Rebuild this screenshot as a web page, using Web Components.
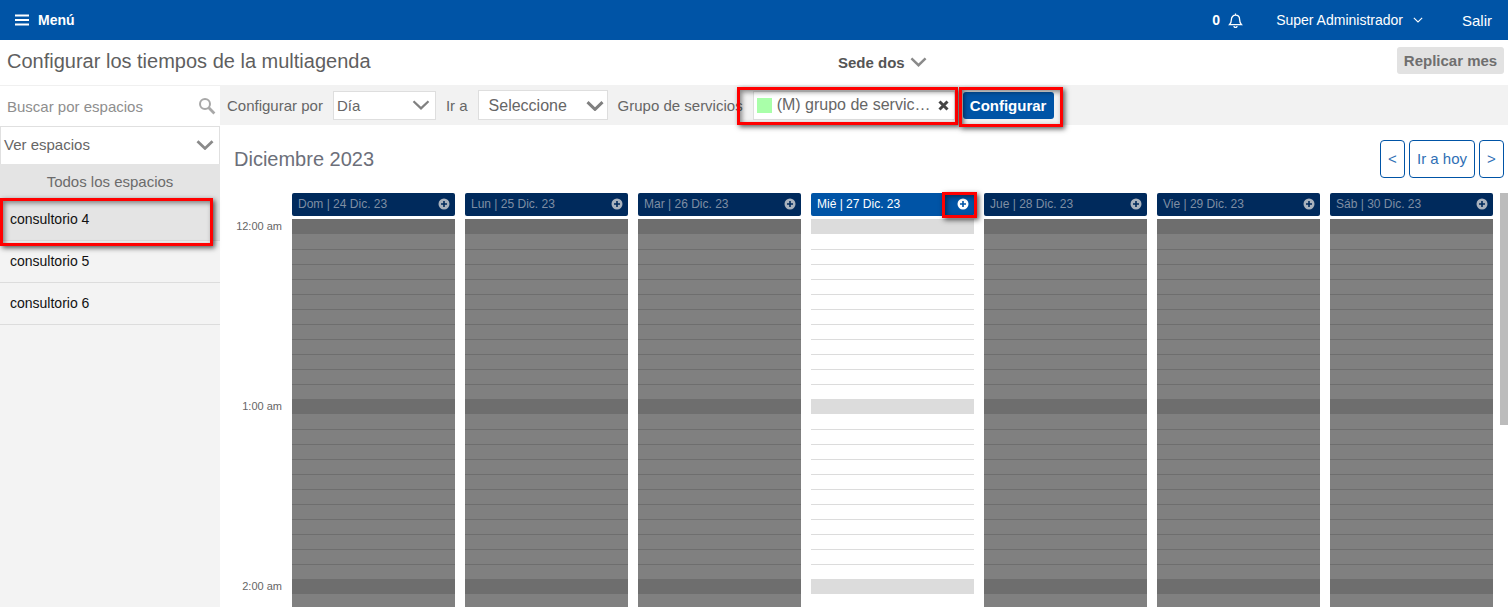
<!DOCTYPE html>
<html lang="es">
<head>
<meta charset="utf-8">
<title>Multiagenda</title>
<style>
  html, body { margin: 0; height: 607px; overflow: hidden; background: #fff; font-family: "Liberation Sans", Arial, sans-serif; }
  #app { position: relative; width: 1508px; height: 607px; overflow: hidden; display: flex; flex-direction: column; }
  #content { display: flex; flex: 1; min-height: 0; }
</style>
</head>
<body>
<div id="app">
  <top-bar></top-bar>
  <page-title></page-title>
  <div id="content">
    <space-sidebar></space-sidebar>
    <cal-main></cal-main>
  </div>
  <red-mark x="737" y="87" w="221" h="38"></red-mark>
  <red-mark x="959" y="87" w="104" h="40"></red-mark>
  <red-mark x="0" y="198" w="213" h="48"></red-mark>
  <red-mark x="942" y="192" w="35" h="26"></red-mark>
</div>

<script>
const CHEVRON = (w, h, stroke, color) => `<svg width="${w}" height="${h}" viewBox="0 0 18 10"><path d="M1.5 1.2 9 8.4 16.5 1.2" fill="none" stroke="${color}" stroke-width="${stroke}"/></svg>`;

class TopBar extends HTMLElement {
  constructor() {
    super();
    this.attachShadow({mode: 'open'});
  }

  connectedCallback() {
    this.shadowRoot.innerHTML = `
      <style>
        :host { display: flex; align-items: center; height: 40px; flex: none; background: #0054a6; color: #fff; font-size: 14px; padding: 0 16px 0 15px; box-sizing: border-box; }
        .menu { display: flex; align-items: center; gap: 9px; font-weight: bold; font-size: 14px; }
        .right { margin-left: auto; display: flex; align-items: center; }
        .bell { display: flex; align-items: center; gap: 8px; margin-right: 33px; font-weight: bold; font-size: 14px; }
        .user { display: flex; align-items: center; gap: 10px; margin-right: 39px; font-size: 14px; }
        .out { font-size: 15px; }
        svg { display: block; }
      </style>
      <div class="menu">
        <svg width="14" height="12" viewBox="0 0 14 12"><path d="M0 1.5h14M0 6h14M0 10.5h14" stroke="#fff" stroke-width="2.2"/></svg>
        <span>Menú</span>
      </div>
      <div class="right">
        <div class="bell">
          <span>0</span>
          <svg width="15" height="15" viewBox="0 0 15 15"><path d="M1.5 11.6c1.2-1.2 1.9-2.3 1.9-5 0-2.5 1.7-4.4 4.1-4.4s4.1 1.9 4.1 4.4c0 2.7.7 3.8 1.9 5zM6 13a1.5 1.5 0 0 0 3 0M7.5 .6v1.6" fill="none" stroke="#fff" stroke-width="1.3"/></svg>
        </div>
        <div class="user"><span>Super Administrador</span>${CHEVRON(10, 6, 2, '#fff')}</div>
        <span class="out">Salir</span>
      </div>`;
  }
}

class PageTitle extends HTMLElement {
  constructor() {
    super();
    this.attachShadow({mode: 'open'});
  }

  connectedCallback() {
    this.shadowRoot.innerHTML = `
      <style>
        :host { display: grid; grid-template-columns: 831px auto 1fr; align-items: center; height: 45px; flex: none; padding: 0 4px 2px 7px; box-sizing: border-box; background: #fff; }
        h1 { margin: 0; font-size: 20px; font-weight: normal; color: #5f5f5f; white-space: nowrap; }
        .sede { display: flex; align-items: center; gap: 5px; font-size: 15px; font-weight: bold; color: #555; margin-top: 1px; }
        button { justify-self: end; border: 0; border-radius: 3px; background: #e2e2e2; color: #6f6f6f; font: bold 15px "Liberation Sans", Arial, sans-serif; height: 27px; width: 107px; padding: 0; margin-top: -2px; }
      </style>
      <h1>Configurar los tiempos de la multiagenda</h1>
      <div class="sede"><span>Sede dos</span>${CHEVRON(17, 10, 2.6, '#8a8a8a')}</div>
      <button>Replicar mes</button>`;
  }
}

class SpaceSidebar extends HTMLElement {
  constructor() {
    super();
    this.attachShadow({mode: 'open'});
  }

  connectedCallback() {
    const items = ['consultorio 4', 'consultorio 5', 'consultorio 6'];
    this.shadowRoot.innerHTML = `
      <style>
        :host { display: block; width: 220px; flex: none; background: #f3f3f3; font-size: 14px; }
        .search { display: flex; align-items: center; justify-content: space-between; height: 41px; padding: 0 4px 0 7px; box-sizing: border-box; background: #fff; border-top: 1px solid #f0f0f0; color: #8e8e8e; font-size: 15px; }
        .select { display: flex; align-items: center; justify-content: space-between; height: 38px; box-sizing: border-box; padding: 0 5px 2px 3px; background: #fff; border: 1px solid #e0e0e0; border-width: 1px 1px 0 1px; color: #666; font-size: 15px; }
        .all { height: 35px; display: flex; align-items: center; justify-content: center; background: #e4e4e4; color: #6b6b6b; font-size: 15px; }
        .item { height: 42px; box-sizing: border-box; display: flex; align-items: center; padding: 0 10px 2px; border-bottom: 1px solid #dcdcdc; color: #111; }
        .item.active { background: #e4e4e4; }
        svg { display: block; }
      </style>
      <div class="search">
        <span>Buscar por espacios</span>
        <svg width="18" height="18" viewBox="0 0 18 18"><circle cx="7" cy="7" r="5" fill="none" stroke="#a8a8a8" stroke-width="2"/><path d="M10.8 10.8 16.4 16.4" stroke="#a8a8a8" stroke-width="2.8"/></svg>
      </div>
      <div class="select"><span>Ver espacios</span>${CHEVRON(18, 10, 2.8, '#8a8a8a')}</div>
      <div class="all">Todos los espacios</div>
      ${items.map((name, i) => `<div class="item${i == 0 ? ' active' : ''}">${name}</div>`).join('')}`;
  }
}

class ConfigToolbar extends HTMLElement {
  constructor() {
    super();
    this.attachShadow({mode: 'open'});
  }

  connectedCallback() {
    this.shadowRoot.innerHTML = `
      <style>
        :host { display: flex; align-items: center; height: 40px; flex: none; background: #f2f2f2; padding-left: 7px; box-sizing: border-box; font-size: 15px; color: #666; }
        .box { display: flex; align-items: center; height: 29px; box-sizing: border-box; background: #fff; border: 1px solid #dedede; }
        .dia { width: 103px; margin: 0 10px 0 10px; justify-content: space-between; padding: 0 5px 0 3px; }
        .sel { width: 130px; height: 30px; margin: 0 10px 0 10px; justify-content: space-between; padding: 1px 3px 0 10px; font-size: 16px; }
        .chip { width: 202px; margin-left: 10px; padding-left: 3px; }
        .sw { width: 15px; height: 15px; background: #a9ffa9; flex: none; margin-right: 5px; }
        .chip span { font-size: 16px; width: 156px; white-space: nowrap; }
        .chip svg { margin-left: 5px; }
        button { margin-left: 8px; width: 91px; height: 27px; border: 0; border-radius: 3px; background: #0054a6; color: #fff; font: bold 15px "Liberation Sans", Arial, sans-serif; padding: 0; }
        svg { display: block; flex: none; }
      </style>
      <span>Configurar por</span>
      <div class="box dia"><span>Día</span>${CHEVRON(18, 10, 2.2, '#808080')}</div>
      <span>Ir a</span>
      <div class="box sel"><span>Seleccione</span>${CHEVRON(18, 10, 3, '#808080')}</div>
      <span>Grupo de servicios</span>
      <div class="box chip">
        <div class="sw"></div>
        <span>(M) grupo de servic…</span>
        <svg width="11" height="11" viewBox="0 0 11 11"><path d="M1.5 1.5 9.5 9.5M9.5 1.5 1.5 9.5" stroke="#444" stroke-width="3"/></svg>
      </div>
      <button>Configurar</button>`;
  }
}

class CalDay extends HTMLElement {
  constructor() {
    super();
    this.attachShadow({mode: 'open'});
  }

  connectedCallback() {
    const open = this.hasAttribute('open');
    let slots = '';
    for (let i = 0; i < 27; i++) {
      let cls = 'slot';
      if (i % 12 == 0) cls += ' hour';
      if (i % 12 == 1) cls += ' first';
      slots += `<div class="${cls}"></div>`;
    }
    const ink = open ? '#fff' : '#a9b2bd';
    const bar = open ? '#0054a6' : '#002a5c';
    this.shadowRoot.innerHTML = `
      <style>
        :host { display: block; width: 163px; --line: ${open ? '#dcdcdc' : '#6e6e6e'}; --bg: ${open ? '#fff' : '#808080'}; --hour: ${open ? '#dcdcdc' : '#6e6e6e'}; }
        .head { display: flex; align-items: center; justify-content: space-between; height: 23px; margin-bottom: 3px; padding: 0 5px 1px 6px; box-sizing: border-box; border-radius: 2px; background: ${bar}; color: ${open ? '#fff' : '#7f8ea3'}; font-size: 12px; }
        .slot { height: 15px; box-sizing: border-box; background: var(--bg); border-top: 1px solid var(--line); }
        .slot.first, .slot.hour { border-top: 0; }
        .slot.hour { background: var(--hour); }
        svg { display: block; }
      </style>
      <div class="head">
        <span><slot></slot></span>
        <svg width="12" height="12" viewBox="0 0 12 12"><circle cx="6" cy="6" r="5.5" fill="${ink}"/><path d="M3 6h6M6 3v6" stroke="${bar}" stroke-width="1.6"/></svg>
      </div>
      ${slots}`;
  }
}

class CalMain extends HTMLElement {
  constructor() {
    super();
    this.attachShadow({mode: 'open'});
  }

  connectedCallback() {
    const days = ['Dom | 24 Dic. 23', 'Lun | 25 Dic. 23', 'Mar | 26 Dic. 23', 'Mié | 27 Dic. 23', 'Jue | 28 Dic. 23', 'Vie | 29 Dic. 23', 'Sáb | 30 Dic. 23'];
    this.shadowRoot.innerHTML = `
      <style>
        :host { display: flex; flex-direction: column; flex: 1; min-width: 0; background: #fff; }
        .head { display: flex; align-items: center; justify-content: space-between; height: 68px; flex: none; padding: 0 4px 0 14px; box-sizing: border-box; }
        h2 { margin: 0; font-size: 20px; font-weight: normal; color: #6c6f7a; }
        .nav { display: flex; gap: 4px; }
        .nav button { height: 38px; width: 25px; padding: 0 0 2px; background: #fff; border: 1px solid #0054a6; border-radius: 4px; color: #2f6fb5; font: 15px "Liberation Sans", Arial, sans-serif; }
        .nav button.today { width: 66px; }
        .grid { display: flex; flex: 1; min-height: 0; overflow: hidden; }
        .times { width: 72px; flex: none; padding-top: 26px; box-sizing: border-box; }
        .times div { height: 180px; box-sizing: border-box; padding-right: 10px; text-align: right; font-size: 11px; line-height: 14px; color: #666; }
        .days { display: flex; gap: 10px; }
        .bar { width: 8px; height: 232px; margin-left: 7px; flex: none; background: #bcbcbc; }
      </style>
      <config-toolbar></config-toolbar>
      <div class="head">
        <h2>Diciembre 2023</h2>
        <div class="nav">
          <button>&lt;</button>
          <button class="today">Ir a hoy</button>
          <button>&gt;</button>
        </div>
      </div>
      <div class="grid">
        <div class="times"><div>12:00 am</div><div>1:00 am</div><div>2:00 am</div></div>
        <div class="days">
          ${days.map((d, i) => `<cal-day${i == 3 ? ' open' : ''}>${d}</cal-day>`).join('')}
        </div>
        <div class="bar"></div>
      </div>`;
  }
}

class RedMark extends HTMLElement {
  constructor() {
    super();
    this.attachShadow({mode: 'open'});
  }

  connectedCallback() {
    const a = n => this.getAttribute(n) + 'px';
    this.shadowRoot.innerHTML = `
      <style>
        :host { position: absolute; left: ${a('x')}; top: ${a('y')}; width: ${a('w')}; height: ${a('h')}; box-sizing: border-box; border: 3px solid #f00; box-shadow: 2px 2px 5px rgba(0,0,0,.65), inset 2px 2px 5px rgba(0,0,0,.45); pointer-events: none; }
      </style>`;
  }
}

customElements.define('top-bar', TopBar);
customElements.define('page-title', PageTitle);
customElements.define('space-sidebar', SpaceSidebar);
customElements.define('config-toolbar', ConfigToolbar);
customElements.define('cal-day', CalDay);
customElements.define('cal-main', CalMain);
customElements.define('red-mark', RedMark);
</script>
</body>
</html>
